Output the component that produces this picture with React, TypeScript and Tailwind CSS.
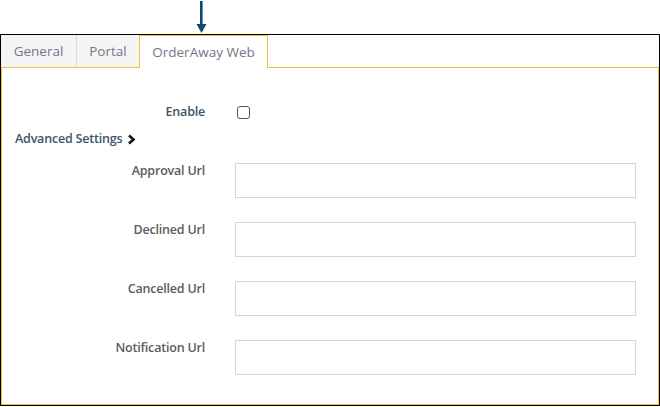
import React from "react";

const font = { fontFamily: '"Open Sans", "Liberation Sans", sans-serif' };

function Row({ label }: { label: string }) {
  return (
    <div className="flex items-start">
      <div className="w-[203px] text-right text-[12.5px] leading-[16px] font-semibold text-[#5c5c5c] tracking-[-0.2px]">
        {label}
      </div>
      <div className="ml-[30px] w-[401px] h-[35px] border border-[#d6d6d6] bg-white" />
    </div>
  );
}

export default function App() {
  return (
    <div className="w-[660px] h-[407px] bg-white overflow-hidden" style={font}>
      <div className="h-[34px] pl-[196px]">
        <svg width="11" height="34" viewBox="0 0 11 34">
          <rect x="4" y="1" width="2.6" height="24" fill="#0d4a6c" />
          <polygon points="0.5,24 10.5,24 5.5,33" fill="#0d4a6c" />
        </svg>
      </div>
      <div className="h-[372px] w-[660px] border border-black flex flex-col">
        <div className="flex h-[33px] shrink-0">
          <div className="w-[76px] bg-[#f4f4f4] border-r border-[#dcdcdc] border-b border-b-[#f1c232] flex items-center justify-center text-[13.5px] text-[#74748a]">
            General
          </div>
          <div className="w-[62px] bg-[#f4f4f4] border-b border-[#f1c232] flex items-center justify-center text-[13.5px] text-[#74748a]">
            Portal
          </div>
          <div className="w-[129px] bg-white border-t border-l border-r border-[#f1c232] flex items-center justify-center text-[13.5px] text-[#74748a]">
            OrderAway Web
          </div>
          <div className="flex-1 border-b border-[#f1c232]" />
        </div>
        <div className="flex-1 border-l border-r border-b border-[#f1c232] pt-[36px]">
          <div className="flex items-center h-[16px]">
            <div className="w-[203px] text-right text-[12.5px] font-semibold text-[#3d5468] tracking-[-0.2px]">
              Enable
            </div>
            <div className="ml-[32px] w-[13px] h-[13px] border border-[#555] rounded-[3px] bg-white" />
          </div>
          <div className="mt-[11px] h-[16px] flex items-center pl-[13px] text-[12.5px] font-semibold text-[#3d5468] tracking-[-0.2px]">
            Advanced Settings
            <svg className="ml-[5px]" width="9" height="11" viewBox="0 0 9 11">
              <polyline points="2,1.5 6.5,5.5 2,9.5" fill="none" stroke="#111" strokeWidth="2.6" />
            </svg>
          </div>
          <div className="mt-[16px] flex flex-col gap-[24px]">
            <Row label="Approval Url" />
            <Row label="Declined Url" />
            <Row label="Cancelled Url" />
            <Row label="Notification Url" />
          </div>
        </div>
      </div>
    </div>
  );
}
